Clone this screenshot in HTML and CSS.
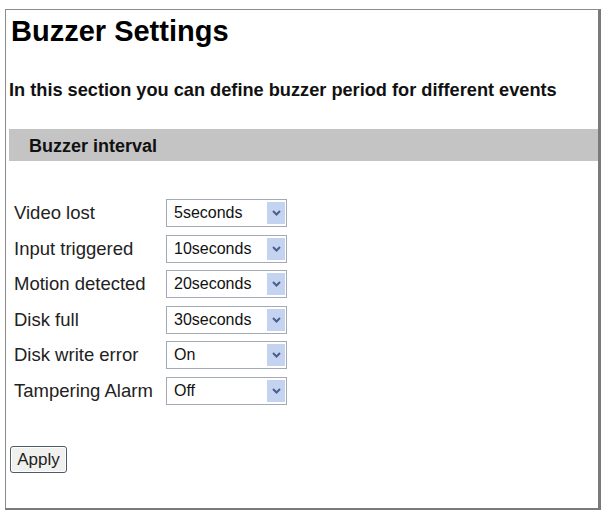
FILE: index.html
```html
<!DOCTYPE html>
<html>
<head>
    <title>Buzzer Settings</title>
    <link rel="stylesheet" href="styles.css">
</head>
<body>
    <div class="frame">
        <h1 class="title">Buzzer Settings</h1>
        <p class="intro">In this section you can define buzzer period for different events</p>

        <div class="section-bar">Buzzer interval</div>

        <div class="fields">
            <span class="field-label">Video lost</span>
            <div class="select">
                <span class="select-value">5seconds</span>
                <span class="select-arrow"><svg width="9" height="6" viewBox="0 0 9 6"><path d="M1 1 L4.5 4.5 L8 1" fill="none" stroke="#4a5f8c" stroke-width="2"/></svg></span>
            </div>

            <span class="field-label">Input triggered</span>
            <div class="select">
                <span class="select-value">10seconds</span>
                <span class="select-arrow"><svg width="9" height="6" viewBox="0 0 9 6"><path d="M1 1 L4.5 4.5 L8 1" fill="none" stroke="#4a5f8c" stroke-width="2"/></svg></span>
            </div>

            <span class="field-label">Motion detected</span>
            <div class="select">
                <span class="select-value">20seconds</span>
                <span class="select-arrow"><svg width="9" height="6" viewBox="0 0 9 6"><path d="M1 1 L4.5 4.5 L8 1" fill="none" stroke="#4a5f8c" stroke-width="2"/></svg></span>
            </div>

            <span class="field-label">Disk full</span>
            <div class="select">
                <span class="select-value">30seconds</span>
                <span class="select-arrow"><svg width="9" height="6" viewBox="0 0 9 6"><path d="M1 1 L4.5 4.5 L8 1" fill="none" stroke="#4a5f8c" stroke-width="2"/></svg></span>
            </div>

            <span class="field-label">Disk write error</span>
            <div class="select">
                <span class="select-value">On</span>
                <span class="select-arrow"><svg width="9" height="6" viewBox="0 0 9 6"><path d="M1 1 L4.5 4.5 L8 1" fill="none" stroke="#4a5f8c" stroke-width="2"/></svg></span>
            </div>

            <span class="field-label">Tampering Alarm</span>
            <div class="select">
                <span class="select-value">Off</span>
                <span class="select-arrow"><svg width="9" height="6" viewBox="0 0 9 6"><path d="M1 1 L4.5 4.5 L8 1" fill="none" stroke="#4a5f8c" stroke-width="2"/></svg></span>
            </div>
        </div>

        <button class="apply" type="button">Apply</button>
    </div>
</body>
</html>
```

FILE: styles.css
```css
/* Buzzer settings page */

body {
    margin: 0;
    background-color: #fff;
    font-family: "Liberation Sans", Arial, sans-serif;
    color: #111;
}

.frame {
    box-sizing: border-box;
    width: 596px;
    height: 501px;
    margin: 9px 0 0 5px;
    border: 1px solid #8c8c8c;
    border-right: 3px solid #7a7a7a;
    border-bottom: 2px solid #7a7a7a;
}

.title {
    margin: 5px 0 0;
    padding-left: 5px;
    font-size: 29px;
    line-height: 32px;
    font-weight: bold;
    color: #000;
}

.intro {
    margin: 32px 0 0;
    padding-left: 3px;
    font-size: 18.2px;
    line-height: 22px;
    font-weight: bold;
}

.section-bar {
    margin: 28px 0 0 3px;
    height: 32px;
    padding: 2px 0 0 20px;
    box-sizing: border-box;
    background-color: #c4c4c4;
    font-size: 18px;
    line-height: 30px;
    font-weight: bold;
}

.fields {
    display: grid;
    grid-template-columns: 152px 121px;
    grid-auto-rows: 28px;
    row-gap: 7.5px;
    margin-top: 38px;
    padding-left: 8px;
}

.field-label {
    font-size: 18.5px;
    line-height: 28px;
    color: #222;
}

.select {
    display: flex;
    align-items: stretch;
    box-sizing: border-box;
    border: 1px solid #a3aab6;
    background-color: #fff;
}

.select-value {
    flex: 1;
    padding-left: 7px;
    font-size: 16px;
    line-height: 26px;
}

.select-arrow {
    display: flex;
    align-items: center;
    justify-content: center;
    width: 18px;
    margin: 2px 1px 2px 0;
    background-color: #c4d3f0;
}

.apply {
    display: block;
    box-sizing: border-box;
    width: 57px;
    height: 27px;
    margin: 41.5px 0 0 4px;
    padding: 0;
    border: 1px solid #4e5a68;
    border-radius: 3px;
    background-color: #f0f0ee;
    box-shadow: inset 0 0 0 1px #fff;
    font-family: "Liberation Sans", Arial, sans-serif;
    font-size: 17px;
    color: #222;
}
```
